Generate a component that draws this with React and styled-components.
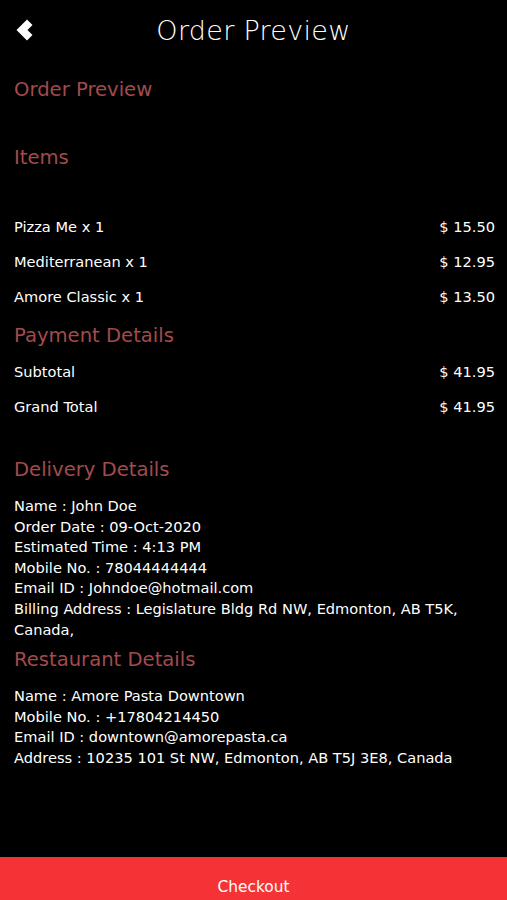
import React from "react";
import styled, { createGlobalStyle } from "styled-components";

const GlobalStyle = createGlobalStyle`
  html, body {
    margin: 0;
    padding: 0;
    background: #000;
  }
  body {
    font-family: "DejaVu Sans", "Open Sans", sans-serif;
  }
`;

const Screen = styled.div`
  width: 507px;
  height: 900px;
  background: #000;
  color: #fff;
  display: flex;
  flex-direction: column;
  overflow: hidden;
`;

const Header = styled.div`
  height: 62px;
  display: flex;
  align-items: center;
  justify-content: center;
  position: relative;
`;

const BackButton = styled.button`
  position: absolute;
  left: 14px;
  top: 18px;
  width: 22px;
  height: 24px;
  padding: 0;
  border: none;
  background: none;
  cursor: pointer;
  display: flex;
`;

const HeaderTitle = styled.h1`
  margin: 0;
  font-size: 27px;
  font-weight: 300;
  letter-spacing: 0.3px;
  line-height: 32px;
`;

const Body = styled.div`
  flex: 1;
  padding: 0 12px 0 14px;
`;

const SectionTitle = styled.h2`
  margin: 0;
  font-size: 19.6px;
  font-weight: 400;
  color: #a24b4d;
  line-height: 24px;
  padding-top: ${({ $top }) => $top || 0}px;
  padding-bottom: ${({ $bottom }) => $bottom || 0}px;
`;

const Row = styled.div`
  display: flex;
  justify-content: space-between;
  align-items: center;
  height: 35px;
  font-size: 14.6px;
`;

const InfoList = styled.div`
  font-size: 14.6px;
  line-height: 20.6px;
  padding-top: ${({ $top }) => $top || 0}px;
`;

const Footer = styled.button`
  height: 43px;
  margin-top: auto;
  border: none;
  background: #f53236;
  color: #fff;
  font-family: inherit;
  font-size: 15.4px;
  display: flex;
  align-items: flex-start;
  justify-content: center;
  padding: 21px 0 0;
`;

const items = [
  { name: "Pizza Me x 1", price: "$ 15.50" },
  { name: "Mediterranean x 1", price: "$ 12.95" },
  { name: "Amore Classic x 1", price: "$ 13.50" },
];

const delivery = [
  "Name : John Doe",
  "Order Date : 09-Oct-2020",
  "Estimated Time : 4:13 PM",
  "Mobile No. : 78044444444",
  "Email ID : Johndoe@hotmail.com",
  "Billing Address : Legislature Bldg Rd NW, Edmonton, AB T5K, Canada,",
];

const restaurant = [
  "Name : Amore Pasta Downtown",
  "Mobile No. : +17804214450",
  "Email ID : downtown@amorepasta.ca",
  "Address : 10235 101 St NW, Edmonton, AB T5J 3E8, Canada",
];

export default function App() {
  return (
    <Screen>
      <GlobalStyle />
      <Header>
        <BackButton aria-label="Back">
          <svg width="22" height="24" viewBox="0 0 22 24">
            <path d="M13 1.5 L18.5 7 L13.5 12 L18.5 17 L13 22.5 L2.5 12 Z" fill="#fff" />
          </svg>
        </BackButton>
        <HeaderTitle>Order Preview</HeaderTitle>
      </Header>

      <Body>
        <SectionTitle $top={16}>Order Preview</SectionTitle>
        <SectionTitle $top={44} $bottom={39}>Items</SectionTitle>
        {items.map((it) => (
          <Row key={it.name}>
            <span>{it.name}</span>
            <span>{it.price}</span>
          </Row>
        ))}
        <SectionTitle $top={10} $bottom={6}>Payment Details</SectionTitle>
        <Row>
          <span>Subtotal</span>
          <span>$ 41.95</span>
        </Row>
        <Row>
          <span>Grand Total</span>
          <span>$ 41.95</span>
        </Row>
        <SectionTitle $top={34}>Delivery Details</SectionTitle>
        <InfoList $top={14}>
          {delivery.map((l) => (
            <div key={l}>{l}</div>
          ))}
        </InfoList>
        <SectionTitle $top={8}>Restaurant Details</SectionTitle>
        <InfoList $top={14}>
          {restaurant.map((l) => (
            <div key={l}>{l}</div>
          ))}
        </InfoList>
      </Body>

      <Footer>Checkout</Footer>
    </Screen>
  );
}
